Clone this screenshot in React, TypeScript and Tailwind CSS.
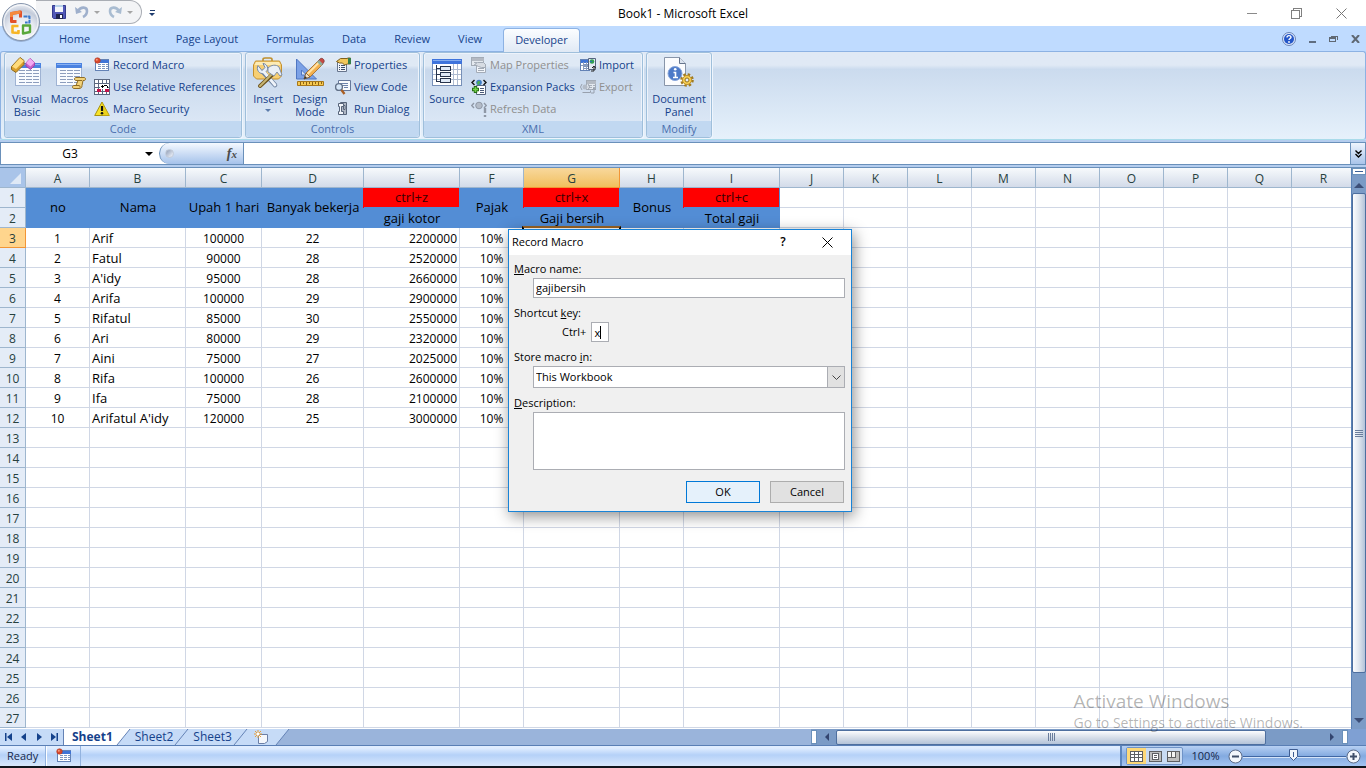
import type { ReactNode } from 'react';

const TABS = ['Home', 'Insert', 'Page Layout', 'Formulas', 'Data', 'Review', 'View'];
const COLUMNS = 'ABCDEFGHIJKLMNOPQR'.split('');
const WIDTHS = [64, 96, 76, 102, 96, 64, 96, 64, 96, 64, 64, 64, 64, 64, 64, 64, 64, 64];

const EMPLOYEES: [string, number, number, number][] = [
  ['Arif', 100000, 22, 2200000],
  ['Fatul', 90000, 28, 2520000],
  ["A'idy", 95000, 28, 2660000],
  ['Arifa', 100000, 29, 2900000],
  ['Rifatul', 85000, 30, 2550000],
  ['Ari', 80000, 29, 2320000],
  ['Aini', 75000, 27, 2025000],
  ['Rifa', 100000, 26, 2600000],
  ['Ifa', 75000, 28, 2100000],
  ["Arifatul A'idy", 120000, 25, 3000000],
];

const BLANK_ROWS = Array.from({ length: 15 }, (_, i) => i + 13);

/* ---------- icons ---------- */

function SheetLines({ x, y, w, h, gray }: { x: number; y: number; w: number; h: number; gray?: boolean }) {
  const head = gray ? '#b4bac3' : '#3f74d6';
  const line = gray ? '#a9b0ba' : '#7d96c0';
  const rows = [];
  for (let ly = y + 5; ly < y + h - 1; ly += 2) rows.push(ly);
  return (
    <g shapeRendering="crispEdges">
      <rect x={x} y={y} width={w} height={h} fill={gray ? '#e4e9ef' : '#fff'} stroke={gray ? '#a3abb6' : '#6382b5'} />
      <rect x={x} y={y} width={w} height="3" fill={head} />
      {rows.map((ly) => (
        <path key={ly} d={`M${x + 2} ${ly}H${x + w - 1}`} stroke={line} strokeDasharray="3 1" />
      ))}
    </g>
  );
}

function LargeGrid() {
  return (
    <g>
      <rect x="4.5" y="6.5" width="25" height="22" fill="#f8fbff" stroke="#9fb3d3" />
      <rect x="4" y="6" width="26" height="5" fill="#4b82e0" />
      <path d="M5 7.500h24" stroke="#87b0f3" />
      <path
        d="M8 13.500h20M8 16.500h20M8 19.500h20M8 22.500h20M8 25.500h20"
        stroke="#8c9dbd"
        strokeDasharray="6 1"
        shapeRendering="crispEdges"
      />
    </g>
  );
}

function VisualBasicIcon() {
  return (
    <svg className="size-8" viewBox="0 0 32 32">
      <LargeGrid />
      <path d="M.5 9.500 9 .5l4 3v4l-8 8-4.500-3z" fill="#d99f2b" stroke="#8d6a1d" />
      <path d="M1 9.500 9 1l4 3-8 8z" fill="#ffdc7c" />
      <path d="m15 6 4-4.500 4.500 4v3l-4 4-4.500-3.500z" fill="#c45fc8" stroke="#a243a8" />
      <path d="m15 6 4-4.500 4.500 4-4 4z" fill="#f3a9f2" />
    </svg>
  );
}

function MacrosIcon() {
  return (
    <svg className="size-8" viewBox="0 0 32 32">
      <g transform="translate(-2 0)">
        <LargeGrid />
      </g>
      <path
        d="M22 20.500h8c2 0 2 3 0 3h-1l-1 5c0 2-1 3-3 3h-5c-2 0-2-3 0-3h2l2-5h-2c-2 0-2-3 0-3z"
        fill="#f2d27a"
        stroke="#8f6c24"
      />
      <path d="M24 23.500h4M20 28.500h5c1 0 1 1 1 2" stroke="#8f6c24" fill="none" />
    </svg>
  );
}

function ToolboxIcon() {
  return (
    <svg className="size-8" viewBox="0 0 32 32">
      <path d="M11 4V2.500c0-1 1-1.500 2-1.500h5c1 0 2 .5 2 1.500V4" fill="none" stroke="#bf8f2c" strokeWidth="1.600" />
      <path d="m1.500 8 2-4h24l2 4v11l-3 3h-22l-3-3z" fill="#f7cf73" stroke="#c4902f" />
      <path d="M4 5h23l1.500 3h-26z" fill="#fdebb5" />
      <path d="m11 15 12 13" stroke="#6f83a0" strokeWidth="4.600" strokeLinecap="round" />
      <path d="M6 8.500c-2 4 1 9 6 8l3-3c2-3-1-7-4-7l2 4-3 3z" fill="#e8eef6" stroke="#7588a3" />
      <path d="m12 15 11 13" stroke="#eef3f9" strokeWidth="2.800" strokeLinecap="round" />
      <path d="M20 18 8 29" stroke="#6d531d" strokeWidth="4" strokeLinecap="round" />
      <path d="M20 17 8 29" stroke="#c6b574" strokeWidth="2" strokeLinecap="round" />
      <path d="M16 11c3-3 8-4 11-1l3 8-2 1-3-4-3 4-6-4z" fill="#eaeff6" stroke="#7f8fa7" />
    </svg>
  );
}

function DesignIcon() {
  return (
    <svg className="size-8" viewBox="0 0 32 32">
      <path d="M2.500 2v20h20z" fill="#7ba1e6" stroke="#4f76c2" />
      <path d="M7.500 13v5h5z" fill="#d7e4f6" stroke="#4f76c2" />
      <path d="M3.500 24.500h26v4h-26z" fill="#f6c84f" stroke="#a7771b" />
      <path d="M6.500 25v3M9.500 25v2M12.500 25v3M15.500 25v2M18.500 25v3M21.500 25v2M24.500 25v3M27.500 25v2" stroke="#8c6315" />
      <path d="m10 22 2-6L25 3l4 4-13 13z" fill="#f4b04d" stroke="#9a672a" strokeWidth=".8" />
      <path d="m13.500 17 12-12" stroke="#ffe3a6" strokeWidth="2" />
      <path d="m24 4 2-2c2-2 5 1 4 3l-2 3z" fill="#c84a43" stroke="#7b3b39" strokeWidth=".8" />
      <path d="m23 5 2-2 4 4-2 2z" fill="#8fae9a" />
      <path d="m10 22 2-6 4 4z" fill="#f8e2c0" stroke="#735b3b" strokeWidth=".8" />
      <path d="m10 22 1-3 2 2z" fill="#333" />
    </svg>
  );
}

function SourceIcon() {
  return (
    <svg className="size-8" viewBox="0 0 32 32" shapeRendering="crispEdges">
      <rect x="1.500" y="2.500" width="29" height="26" fill="#fff" stroke="#7790b8" />
      <rect x="1" y="2" width="30" height="5" fill="#3f74dc" />
      <path d="M2 3.500h28" stroke="#86aef0" />
      <path d="M2 12.500h28M2 17.500h28M2 22.500h28M22.500 7v21M26.500 7v21" stroke="#aebbd0" />
      <path d="M5.500 8v17M5.500 11.500h4M5.500 17.500h4M5.500 24.500h4" stroke="#27344d" fill="none" />
      <g fill="#dfe9f6" stroke="#27344d">
        <path d="M9.500 9.500h10v4h-10zM9.500 15.500h10v4h-10zM9.500 21.500h10v4h-10z" />
      </g>
    </svg>
  );
}

function DocumentPanelIcon() {
  return (
    <svg className="size-8" viewBox="0 0 32 32">
      <path d="M1.500.500h15l6 6v22h-21z" fill="#fbfcfe" stroke="#8895a9" />
      <path d="M16.500.500v6h6" fill="#dce4ef" stroke="#66758d" />
      <circle cx="12" cy="16.500" r="7" fill="#4d7ac8" stroke="#88a7dc" />
      <path d="M10.500 15.500h2V20M10 20.500h5" stroke="#fff" strokeWidth="1.600" fill="none" />
      <circle cx="12.200" cy="12.300" r="1.300" fill="#fff" />
      <circle cx="24" cy="23" r="5.500" fill="none" stroke="#a07b22" strokeWidth="2.600" strokeDasharray="2.400 1.920" />
      <circle cx="24" cy="23" r="4.500" fill="#f7cf55" stroke="#c0922b" />
      <circle cx="24" cy="23" r="2" fill="#e6eefa" stroke="#93701c" />
    </svg>
  );
}

function RecordIcon() {
  return (
    <svg className="size-4 shrink-0" viewBox="0 0 16 16">
      <SheetLines x={1.5} y={2.5} w={13} h={11} />
      <circle cx="3.500" cy="3.500" r="2.800" fill="#d8492c" stroke="#a83320" strokeWidth=".5" />
      <circle cx="2.800" cy="2.800" r="1" fill="#f69a7c" />
    </svg>
  );
}

function RelativeIcon() {
  return (
    <svg className="size-4 shrink-0" viewBox="0 0 16 16" shapeRendering="crispEdges">
      <path d="M1 1h14v14H1z" fill="#fff" />
      <path d="M.5.500h15v15H.500zM4.500 0v16M8.500 0v16M12.500 0v16M0 4.500h16M0 8.500h16M0 12.500h16" fill="none" stroke="#5b6880" />
      <path d="M3 10h4v3H3zM11 10h4v3h-4z" fill="#c4144a" />
      <path d="M6 5h8v5H6z" fill="#fff" />
      <path d="M7 7.500h3M8.500 6v3M10 6.500h3M13.500 7v2" stroke="#000" />
    </svg>
  );
}

function WarningIcon() {
  return (
    <svg className="size-4 shrink-0" viewBox="0 0 16 16">
      <path d="M8 1 15.300 14.500H.7z" fill="#f8e329" stroke="#a89210" strokeLinejoin="round" />
      <path d="M8 1 15.300 14.500H9z" fill="#e3c313" opacity=".6" />
      <path d="M8 5v5" stroke="#111" strokeWidth="2.200" />
      <circle cx="8" cy="12.300" r="1.300" fill="#111" />
    </svg>
  );
}

function PropertiesIcon({ gray }: { gray?: boolean }) {
  return (
    <svg className="size-4 shrink-0" viewBox="0 0 16 16">
      {gray && <SheetLines x={0.5} y={0.5} w={12} h={8} gray />}
      <path d={gray ? 'M5.500 7.500h9v8h-9z' : 'M2.500 4.500h9v10h-9z'} fill="#f2f5fa" stroke={gray ? '#a3abb6' : '#66748c'} />
      <path
        d={gray ? 'M7 11.500h6M7 13.500h6' : 'M4 8.500h1M6 8.500h4M4 10.500h1M6 10.500h4M4 12.500h1M6 12.500h4'}
        stroke={gray ? '#a3abb6' : '#3c4c69'}
      />
      <path
        d={gray ? 'm3.500 7.500 3-2h6l2 2v3h-4l-3-1z' : 'm1.500 4.500 4-3h7V1h3v6h-3l-3 1-2-2h-3z'}
        fill={gray ? '#d7dce3' : '#f2c75a'}
        stroke={gray ? '#a3abb6' : '#80611e'}
      />
      {!gray && <path d="M13 1h3v6h-3z" fill="#377e49" />}
    </svg>
  );
}

function ViewCodeIcon() {
  return (
    <svg className="size-4 shrink-0" viewBox="0 0 16 16">
      <path d="M3.500 1.500h12v10h-12z" fill="#f8fafd" stroke="#66789b" />
      <path d="M5 4.500h8M7 6.500h6M9 8.500h4" stroke="#6d83ab" />
      <circle cx="4" cy="8" r="3.400" fill="#d5e6f8" stroke="#627188" strokeWidth="1.400" />
      <path d="m6.500 11 3 4" stroke="#a95e23" strokeWidth="2.400" />
    </svg>
  );
}

function RunDialogIcon() {
  return (
    <svg className="size-4 shrink-0" viewBox="0 0 16 16">
      <path d="M5.500 1.500h6v12h-5z" fill="#aeb6c3" stroke="#57647a" />
      <path d="M3.500 2.500h5v3h-2v5h2v3h-5v-3h1v-5h-1z" fill="#f2f5fa" stroke="#57647a" />
      <path d="M8.500 4.500h1.500v4H8.500z" fill="#e9edf3" stroke="#57647a" />
    </svg>
  );
}

function ExpansionIcon() {
  return (
    <svg className="size-4 shrink-0" viewBox="0 0 16 16">
      <path d="M5.500 6.500h9v9h-9z" fill="#fff" stroke="#55647f" />
      <path d="M9 9.500h4M9 11.500h4M9 13.500h4" stroke="#4a5a78" />
      <circle cx="8" cy="3.500" r="2.800" fill="#3b7bc4" />
      <path d="M6 4c1-3 3-2 3-1S8 6 7 6z" fill="#4caf50" />
      <path d="M3.500 1 1 3.500 3.500 6M12.500 1 15 3.500 12.500 6" fill="none" stroke="#111" strokeWidth="1.400" />
      <path d="M4.500 7v7M1 10.500h7" stroke="#276f17" strokeWidth="3.400" />
      <path d="M4.500 8v5M2 10.500h5" stroke="#74d24b" strokeWidth="1.600" />
    </svg>
  );
}

function RefreshIcon() {
  return (
    <svg className="size-4 shrink-0" viewBox="0 0 16 16" fill="none" stroke="#8f98a6">
      <circle cx="8" cy="4.500" r="3.300" fill="#b4bcc8" />
      <path d="M3 2 .7 4.500 3 7M13 2l2.300 2.500L13 7" strokeWidth="1.400" />
      <path d="M14 7v5M14 14v2" strokeWidth="2.400" />
    </svg>
  );
}

function TransferIcon({ gray }: { gray?: boolean }) {
  return (
    <svg className="size-4 shrink-0" viewBox="0 0 16 16">
      {gray ? (
        <>
          <SheetLines x={6.5} y={1.5} w={9} h={9} gray />
          <circle cx="5" cy="8" r="2.500" fill="#b4bcc8" />
          <path d="m2 5-1.500 3L2 11M8 5l1.500 3L8 11M2.500 13.500h8v-2" fill="none" stroke="#98a0ad" />
        </>
      ) : (
        <>
          <SheetLines x={0.5} y={2.5} w={9} h={11} />
          <path d="M3.500 5v8M6.500 5v8M1 8.500h8" stroke="#8b9cba" shapeRendering="crispEdges" />
          <path d="M8.500 1.500h7v11h-7z" fill="#e3eaf4" stroke="#55647f" />
          <circle cx="12" cy="4.500" r="2.300" fill="#2f9e52" />
          <path d="M10 4.500h2" stroke="#2c6fb5" />
        </>
      )}
      <path d="M11 14h3v-4m-2 1 2-2 1.500 2" fill="none" stroke={gray ? '#98a0ad' : '#222'} />
    </svg>
  );
}

function OfficeButton() {
  return (
    <button aria-label="Office Button" className="absolute left-0 top-0 z-20">
      <svg className="h-[44px] w-[42px]" viewBox="1 0 42 44">
        <defs>
          <radialGradient id="orb" cx="50%" cy="75%" r="75%">
            <stop offset="0" stopColor="#fff" />
            <stop offset=".5" stopColor="#e6e9f0" />
            <stop offset=".75" stopColor="#c3cbda" />
            <stop offset="1" stopColor="#f2f4f8" />
          </radialGradient>
        </defs>
        <circle cx="22" cy="23" r="19" fill="#6f85a8" opacity=".5" />
        <circle cx="22" cy="22" r="18.500" fill="url(#orb)" stroke="#8796ad" />
        <circle cx="22" cy="22" r="17" fill="none" stroke="#fff" strokeOpacity=".8" />
        <g fill="none" strokeLinejoin="round">
          <path d="M17.500 21.500h-5v-8l9-1.500v5.500" stroke="#e2502a" strokeWidth="3" />
          <path d="M12.500 17v-3.500l9-1.500" stroke="#f58a3c" strokeWidth="3" />
          <path d="M24.500 16.500h6v6h-4.500" stroke="#3a78cc" strokeWidth="2" strokeDasharray="4 .6" />
          <path d="M19.500 26h-6v6.500l6 .5v-3" stroke="#f7b526" strokeWidth="2.600" />
          <path d="M24 25.500h7v6.500l-7 1.500z" stroke="#5aa83c" strokeWidth="2.400" />
        </g>
      </svg>
    </button>
  );
}

/* ---------- ribbon pieces ---------- */

function Group({ label, children }: { label: string; children: ReactNode }) {
  return (
    <section className="flex h-[86px] flex-col rounded-[3px] border border-[#9fbfdb] bg-linear-to-b from-[#dfe9f5] from-15% via-[#c8d8ec] via-20% to-[#e0ebf8] shadow-[inset_0_0_0_1px_#edf3fb,1px_1px_0_#eef5fd]">
      <div className="flex h-[68px] px-[2px] pt-px">{children}</div>
      <h2 className="h-4 rounded-b-[3px] bg-[#c1d8f1] text-center leading-4 text-[#4a6fae]">{label}</h2>
    </section>
  );
}

function BigButton({ icon, lines, arrow, className }: { icon: ReactNode; lines: string[]; arrow?: boolean; className: string }) {
  return (
    <button className={`flex flex-col items-center pt-[3px] leading-[13px] ${className}`}>
      {icon}
      <span className="mt-[3px] whitespace-nowrap">{lines[0]}</span>
      {lines[1] && <span className="whitespace-nowrap">{lines[1]}</span>}
      {arrow && <span className="mt-1 border-x-[3px] border-t-[3px] border-x-transparent border-t-[#5c7cab]" />}
    </button>
  );
}

function SmallButton({ icon, label, disabled }: { icon: ReactNode; label: string; disabled?: boolean }) {
  return (
    <button disabled={disabled} className="flex h-[22px] items-center gap-[3px] whitespace-nowrap disabled:text-[#8f8f8f]">
      {icon}
      {label}
    </button>
  );
}

function TitleBar() {
  return (
    <header className="relative flex h-[26px] items-center bg-white">
      <div className="ml-[36px] flex h-6 w-[106px] items-center gap-[7px] self-start rounded-br-[12px] rounded-tr-[12px] border border-l-0 border-[#a9adb4] bg-[#f3f4f6] pl-[15px]">
        <button aria-label="Save">
          <svg className="size-4" viewBox="0 0 16 16">
            <path d="M1.500 1.500h13v13h-12l-1-1z" fill="#5158b8" stroke="#353b8f" />
            <path d="M4 1h8v7H4z" fill="#f3f5fb" />
            <path d="M4 1h8v2H4z" fill="#b6d0ea" />
            <path d="M5 10h7v5H5z" fill="#20254f" />
            <path d="M9 11h2v3H9z" fill="#fff" />
          </svg>
        </button>
        <button aria-label="Undo" className="flex items-center gap-1">
          <svg className="size-4" viewBox="0 0 16 16" fill="none">
            <path d="M4 7c3-5 9-4 9 0 0 3-2 5-4 6" stroke="#9fb0cc" strokeWidth="2.600" />
            <path d="m1 3 1 7 6-2z" fill="#9fb0cc" />
          </svg>
          <span className="border-x-[3px] border-t-[3px] border-x-transparent border-t-[#a5a5a5]" />
        </button>
        <button aria-label="Redo" className="flex items-center gap-1">
          <svg className="size-4" viewBox="0 0 16 16" fill="none">
            <path d="M12 7c-3-5-9-4-9 0 0 3 2 5 4 6" stroke="#a9bcd1" strokeWidth="2.600" />
            <path d="m15 3-1 7-6-2z" fill="#a9bcd1" />
          </svg>
          <span className="border-x-[3px] border-t-[3px] border-x-transparent border-t-[#a5a5a5]" />
        </button>
      </div>
      <button aria-label="Customize Quick Access Toolbar" className="ml-[7px] flex flex-col items-center gap-[2px]">
        <span className="h-px w-[5px] bg-[#1f3c6e]" />
        <span className="border-x-[3px] border-t-[3px] border-x-transparent border-t-[#1f3c6e]" />
      </button>
      <h1 className="absolute inset-x-0 pt-px text-center text-xs text-black">Book1 - Microsoft Excel</h1>
      <div className="relative ml-auto flex items-center gap-[34px] pr-[19px]">
        <button aria-label="Minimize" className="h-px w-[10px] bg-[#8a8a8a]" />
        <button aria-label="Restore">
          <svg className="size-[11px]" viewBox="0 0 11 11" fill="none" stroke="#808080" shapeRendering="crispEdges">
            <path d="M.5 2.500h8v8h-8zM2.500 2V.500h8v8H9" />
          </svg>
        </button>
        <button aria-label="Close">
          <svg className="size-[11px]" viewBox="0 0 11 11" stroke="#777">
            <path d="m.5.500 10 10m0-10-10 10" />
          </svg>
        </button>
      </div>
    </header>
  );
}

function TabStrip() {
  return (
    <nav className="flex h-[25px] items-end bg-[#bfdbff] pl-[45px] text-[#15428b]">
      {TABS.map((tab) => (
        <button key={tab} className="h-6 px-[14px]">
          {tab}
        </button>
      ))}
      <button className="relative z-10 -mb-px ml-[7px] h-6 rounded-t-[4px] border border-b-0 border-[#8db2e3] bg-linear-to-b from-[#fbfdff] to-[#e0e9f5] px-[11px]">
        Developer
      </button>
      <div className="ml-auto flex h-6 items-center gap-[13px] pr-[6px]">
        <button aria-label="Help">
          <svg className="size-[14px]" viewBox="0 0 14 14">
            <circle cx="7" cy="7" r="6.500" fill="#dce8fb" stroke="#6b83b5" />
            <circle cx="7" cy="7" r="5" fill="#2456c8" />
            <path d="M5 5.500C5 3 9 3 9 5.300 9 6.500 7 6.500 7 8" fill="none" stroke="#fff" strokeWidth="1.400" />
            <circle cx="7" cy="10" r=".9" fill="#fff" />
          </svg>
        </button>
        <button aria-label="Minimize workbook" className="mt-[6px] h-[2px] w-[7px] bg-[#5f6d80]" />
        <button aria-label="Restore workbook">
          <svg className="h-[8px] w-[9px]" viewBox="0 0 9 8" fill="none" stroke="#5f6873" shapeRendering="crispEdges">
            <path d="M.5 2.500h6v4h-6zM2 1h6.500v4" />
            <path d="M0 2.500h7" strokeWidth="2" />
          </svg>
        </button>
        <button aria-label="Close workbook">
          <svg className="h-[8px] w-[9px]" viewBox="0 0 9 8" stroke="#5f6873" strokeWidth="2">
            <path d="m1 0 7 8m0-8L1 8" />
          </svg>
        </button>
      </div>
    </nav>
  );
}

function Ribbon() {
  return (
    <div className="bg-[#bfdbff]">
      <div className="flex h-[89px] gap-[3px] rounded-[3px] border border-[#8db2e3] border-b-[#a9dbea] bg-linear-to-b from-[#e0e9f5] from-15% via-[#cbdbee] via-20% to-[#e6f1fb] px-[3px] text-[#15428b]">
        <Group label="Code">
          <BigButton className="w-[40px]" icon={<VisualBasicIcon />} lines={['Visual', 'Basic']} />
          <BigButton className="w-[45px]" icon={<MacrosIcon />} lines={['Macros']} />
          <div className="w-[147px] pl-[2px]">
            <SmallButton icon={<RecordIcon />} label="Record Macro" />
            <SmallButton icon={<RelativeIcon />} label="Use Relative References" />
            <SmallButton icon={<WarningIcon />} label="Macro Security" />
          </div>
        </Group>
        <Group label="Controls">
          <BigButton className="w-[40px]" icon={<ToolboxIcon />} lines={['Insert']} arrow />
          <BigButton className="w-[44px]" icon={<DesignIcon />} lines={['Design', 'Mode']} />
          <div className="w-[85px] pl-[3px]">
            <SmallButton icon={<PropertiesIcon />} label="Properties" />
            <SmallButton icon={<ViewCodeIcon />} label="View Code" />
            <SmallButton icon={<RunDialogIcon />} label="Run Dialog" />
          </div>
        </Group>
        <Group label="XML">
          <BigButton className="w-[42px]" icon={<SourceIcon />} lines={['Source']} />
          <div className="w-[111px] pl-[3px]">
            <SmallButton icon={<PropertiesIcon gray />} label="Map Properties" disabled />
            <SmallButton icon={<ExpansionIcon />} label="Expansion Packs" />
            <SmallButton icon={<RefreshIcon />} label="Refresh Data" disabled />
          </div>
          <div className="w-[61px] pl-px">
            <SmallButton icon={<TransferIcon />} label="Import" />
            <SmallButton icon={<TransferIcon gray />} label="Export" disabled />
          </div>
        </Group>
        <Group label="Modify">
          <BigButton className="w-[60px]" icon={<DocumentPanelIcon />} lines={['Document', 'Panel']} />
        </Group>
      </div>
    </div>
  );
}

function FormulaBar() {
  return (
    <div className="border-y-2 border-[#b4cdee] bg-[#b4cdee]">
      <div className="flex h-[23px] border-y border-[#6a90ba] bg-white">
        <div className="flex w-[159px] items-center border-l border-[#6a90ba]">
          <input aria-label="Name Box" defaultValue="G3" className="w-[138px] text-center text-xs text-black outline-none" />
          <button aria-label="Name list" className="ml-[6px] border-x-4 border-t-4 border-x-transparent border-t-black" />
        </div>
        <div className="flex w-[85px] items-center justify-between rounded-l-[11px] border border-y-0 border-[#6a90ba] bg-linear-to-b from-[#f5f9ff] to-[#a5c2ea] pl-[5px] pr-[6px]">
          <span className="size-[9px] rounded-full border border-[#c3cbd8] bg-linear-to-br from-[#8e9cb5] to-[#f6f9ff]" />
          <button aria-label="Insert Function" className="font-['Liberation_Serif',serif] text-sm font-bold italic text-[#4c4c4c]">
            f<span className="text-[11px]">x</span>
          </button>
        </div>
        <input aria-label="Formula Bar" className="min-w-0 flex-1 px-1 text-xs outline-none" />
        <button aria-label="Expand Formula Bar" className="flex w-4 items-center justify-center border border-y-0 border-[#6a90ba] bg-linear-to-b from-[#eef4fd] to-[#a9c4ea]">
          <svg className="h-2 w-[7px]" viewBox="0 0 7 8" fill="none" stroke="#000" strokeWidth="1.400">
            <path d="m.5.500 3 3 3-3M.5 4l3 3 3-3" />
          </svg>
        </button>
      </div>
    </div>
  );
}

/* ---------- worksheet ---------- */

const CELL = 'h-5 border-b border-r border-[#d0d7e5] p-0 pt-[2px]';
const BLUE = 'border-0 bg-[#538dd5] p-0 text-center text-[13px] font-normal';
const MERGED = 'border-0 bg-[#538dd5] p-0 pb-[2px] text-center text-[13px] font-normal';
const RED =
  'relative h-5 border-b border-r border-[#538dd5] bg-[#ff0000] p-0 text-center text-[13px] font-normal text-[#3a0000] shadow-[-1px_0_0_#ff0000]';

function RowHeader({ n }: { n: number }) {
  return (
    <th
      scope="row"
      className={`h-5 border-b border-r p-0 pt-[2px] text-center font-normal text-[#27413e] ${
        n === 3 ? 'border-[#f29536] bg-[#ffd58d]' : 'border-[#9eb6ce] bg-[#e4ecf7]'
      }`}
    >
      {n}
    </th>
  );
}

function EmptyCells({ count }: { count: number }) {
  return Array.from({ length: count }, (_, i) => <td key={i} className={CELL} />);
}

function Worksheet() {
  return (
    <div className="min-w-0 flex-1 overflow-hidden bg-white">
      <table className="w-max table-fixed border-separate border-spacing-0 whitespace-nowrap font-['Open_Sans','Noto_Sans',sans-serif] text-xs leading-[17px] text-black">
        <colgroup>
          <col className="w-[26px]" />
          {WIDTHS.map((width, i) => (
            <col key={i} style={{ width }} />
          ))}
        </colgroup>
        <thead>
          <tr>
            <th className="relative h-5 border-b border-r border-[#9eb6ce] bg-[#a9c4e9] p-0">
              <button aria-label="Select all" className="absolute bottom-[3px] right-[4px] border-b-[11px] border-l-[11px] border-b-[#dfe9f6] border-l-transparent" />
            </th>
            {COLUMNS.map((c) => (
              <th
                key={c}
                scope="col"
                className={`h-5 border-b border-r bg-linear-to-b p-0 pt-[2px] text-center font-normal text-[#27413e] ${
                  c === 'G' ? 'border-[#f29536] from-[#f8d89c] to-[#f1bf5c]' : 'border-[#9eb6ce] from-[#f7fafc] to-[#d3dbe9]'
                }`}
              >
                {c}
              </th>
            ))}
          </tr>
        </thead>
        <tbody>
          <tr>
            <RowHeader n={1} />
            <th rowSpan={2} className={MERGED}>no</th>
            <th rowSpan={2} className={MERGED}>Nama</th>
            <th rowSpan={2} className={MERGED}>Upah 1 hari</th>
            <th rowSpan={2} className={MERGED}>Banyak bekerja</th>
            <td className={RED}>ctrl+z</td>
            <th rowSpan={2} className={MERGED}>Pajak</th>
            <td className={RED}>ctrl+x</td>
            <th rowSpan={2} className={MERGED}>Bonus</th>
            <td className={RED}>ctrl+c</td>
            <EmptyCells count={9} />
          </tr>
          <tr>
            <RowHeader n={2} />
            <th className={BLUE}>gaji kotor</th>
            <th className={BLUE}>Gaji bersih</th>
            <th className={BLUE}>Total gaji</th>
            <EmptyCells count={9} />
          </tr>
          {EMPLOYEES.map(([name, wage, days, gross], i) => (
            <tr key={name}>
              <RowHeader n={i + 3} />
              <td className={`${CELL} text-center`}>{i + 1}</td>
              <td className={`${CELL} pl-[2px] text-[13px]`}>{name}</td>
              <td className={`${CELL} text-center`}>{wage}</td>
              <td className={`${CELL} text-center`}>{days}</td>
              <td className={`${CELL} pr-[2px] text-right`}>{gross}</td>
              <td className={`${CELL} text-center`}>10%</td>
              <td className={`${CELL} relative`}>
                {i === 0 && <span className="absolute -inset-[2px] border-2 border-black border-t-[#9c6524]" />}
              </td>
              <EmptyCells count={11} />
            </tr>
          ))}
          {BLANK_ROWS.map((n) => (
            <tr key={n}>
              <RowHeader n={n} />
              <EmptyCells count={18} />
            </tr>
          ))}
        </tbody>
      </table>
    </div>
  );
}

function VerticalScrollbar() {
  return (
    <div className="flex w-[15px] flex-col items-center border-l border-[#5b82b6] bg-[#7b9bc6]">
      <div className="flex h-[7px] w-full items-center justify-center border border-[#6a90ba] bg-white">
        <span className="h-px w-2 bg-[#3c6096]" />
      </div>
      <button aria-label="Scroll up" className="flex h-[18px] w-full items-center justify-center pt-[2px]">
        <span className="border-x-[5px] border-b-[5px] border-x-transparent border-b-[#3d4f78]" />
      </button>
      <div className="flex h-[480px] w-full flex-col items-center justify-center gap-px rounded-[2px] border border-[#4e6f9f] bg-linear-to-r from-[#fbfcfe] via-[#dfe5ee] to-[#b4c3d9]">
        {[0, 1, 2, 3].map((i) => (
          <span key={i} className="h-px w-2 bg-[#6a7d9c]" />
        ))}
      </div>
      <button aria-label="Scroll down" className="mt-auto flex h-[18px] w-full items-center justify-center">
        <span className="border-x-[5px] border-t-[5px] border-x-transparent border-t-[#3d4f78]" />
      </button>
    </div>
  );
}

function Slope({ fill, next }: { fill: string; next: string }) {
  return (
    <svg className="h-4 w-[17px] shrink-0" viewBox="0 0 17 16">
      <path d="M0 0h17v16H0z" fill={next} />
      <path d="M0 0h15L2 16H0z" fill={fill} />
      <path d="M15 0 2 16" stroke="#6482b5" fill="none" />
    </svg>
  );
}

function SheetBar() {
  return (
    <div className="flex h-[17px] border-b border-[#5a7fb5] bg-[#9ab4db]">
      <div className="flex w-[63px] items-center justify-between bg-[#c6dbf7] px-[5px]">
        {['M0 0h1.500v8H0zM7 0v8L2 4z', 'M6 0v8L1 4z', 'M2 0v8l5-4z', 'M6.500 0H8v8H6.500zM1 0v8l5-4z'].map((d, i) => (
          <button key={d} aria-label={['First sheet', 'Previous sheet', 'Next sheet', 'Last sheet'][i]}>
            <svg className="size-2" viewBox="0 0 8 8" fill="#15428b">
              <path d={d} />
            </svg>
          </button>
        ))}
      </div>
      <button className="border-l border-[#6482b5] bg-white pl-2 pr-[2px] text-xs font-bold leading-4 text-[#15428b]">Sheet1</button>
      <Slope fill="#fff" next="#c6dbf7" />
      <button className="bg-[#c6dbf7] pl-[3px] text-xs leading-4 text-[#15428b]">Sheet2</button>
      <Slope fill="#c6dbf7" next="#c6dbf7" />
      <button className="bg-[#c6dbf7] pl-[3px] text-xs leading-4 text-[#15428b]">Sheet3</button>
      <Slope fill="#c6dbf7" next="#c6dbf7" />
      <button aria-label="Insert Worksheet" className="bg-[#c6dbf7] px-[5px]">
        <svg className="size-[15px]" viewBox="0 0 15 15">
          <path d="M4.500 4.500h9v7l-3 2h-6z" fill="#f4f7fc" stroke="#6b7fa6" />
          <path d="M4 0v8M0 4h8M1 1l6 6M7 1 1 7" stroke="#e9a036" />
          <circle cx="4" cy="4" r="1.500" fill="#fff" />
        </svg>
      </button>
      <Slope fill="#c6dbf7" next="#9ab4db" />
      <div className="ml-auto flex w-[555px] items-center bg-[#7b9bc6]">
        <span className="h-[14px] w-[6px] border border-[#6a90ba] bg-white" />
        <button aria-label="Scroll left" className="flex w-[19px] justify-center">
          <span className="border-y-4 border-r-4 border-y-transparent border-r-[#33456f]" />
        </button>
        <div className="flex h-[15px] flex-1 items-center justify-center gap-px rounded-[2px] border border-[#4e6f9f] bg-linear-to-b from-[#fbfcfe] via-[#d6dee9] to-[#b4c3d9]">
          {[0, 1, 2, 3].map((i) => (
            <span key={i} className="h-2 w-px bg-[#6a7d9c]" />
          ))}
        </div>
        <button aria-label="Scroll right" className="flex w-[76px] justify-end pr-[8px]">
          <span className="border-y-4 border-l-4 border-y-transparent border-l-[#33456f]" />
        </button>
        <span className="h-[14px] w-[6px] border border-[#6a90ba] bg-white" />
        <span className="h-full w-[18px] bg-[#7fa0d3]" />
      </div>
    </div>
  );
}

function StatusBar() {
  return (
    <footer className="border-b-2 border-[#10151d]">
      <div className="flex h-5 bg-linear-to-b from-[#e0edff] from-10% via-[#b5d1f8] via-45% to-[#d9e8fc] leading-5 text-[#15284b]">
        <span className="w-[46px] border-r border-[#93b3df] pl-[7px]">Ready</span>
        <button aria-label="Record macro" className="flex w-[35px] items-center justify-center border-l border-r border-l-white border-r-[#93b3df]">
          <RecordIcon />
        </button>
        <div className="ml-auto flex items-center border-l-2 border-[#5d86bf] bg-linear-to-b from-[#b7d0f3] via-[#83aae0] to-[#a3c4f2] pl-1 pr-[5px]">
          <div className="flex h-[18px] items-center rounded-[2px] border border-[#6f93c7] bg-[#c9dbf3]">
            <button aria-label="Normal view" className="flex h-full w-[19px] items-center justify-center bg-[#fdd878]">
              <svg className="h-[11px] w-[13px]" viewBox="0 0 13 11" shapeRendering="crispEdges">
                <path d="M.5.500h12v10H.500zM4.500 0v11M8.500 0v11M0 3.500h13M0 6.500h13" fill="#fff" stroke="#5e5f62" />
              </svg>
            </button>
            <button aria-label="Page layout view" className="flex w-[19px] justify-center">
              <svg className="h-[11px] w-[13px]" viewBox="0 0 13 11" shapeRendering="crispEdges">
                <path d="M.5.500h12v10H.500z" fill="#bdbdbd" stroke="#5e5f62" />
                <path d="M3.500 2.500h6v6h-6zM5 4.500h3M5 6.500h3" fill="#fff" stroke="#5e5f62" />
              </svg>
            </button>
            <button aria-label="Page break view" className="flex w-[17px] justify-center">
              <svg className="h-[11px] w-[13px]" viewBox="0 0 13 11" shapeRendering="crispEdges">
                <path d="M.5.500h12v10H.500z" fill="#bdbdbd" stroke="#5e5f62" />
                <path d="M.5.500h4v6h-4zM4.500.500h4v6h-4z" fill="#f4f4f4" stroke="#5e5f62" />
              </svg>
            </button>
          </div>
          <button className="w-[45px] text-center">100%</button>
          <button aria-label="Zoom out">
            <svg className="size-[15px]" viewBox="0 0 15 15">
              <circle cx="7.500" cy="7.500" r="6.500" fill="#f2f6fc" stroke="#5b6b88" />
              <path d="M4 7.500h7" stroke="#3f4e69" strokeWidth="2" />
            </svg>
          </button>
          <div className="relative flex h-full w-[103px] items-center">
            <span className="h-px w-full bg-[#3f66a3] shadow-[0_1px_0_#d5e4f8]" />
            <input aria-label="Zoom" type="range" className="absolute inset-0 opacity-0" />
            <svg className="pointer-events-none absolute left-[46px] top-[3px] h-3 w-[9px]" viewBox="0 0 9 12">
              <path d="M.5.500h8v7l-4 4-4-4z" fill="#f2f6fc" stroke="#3f5d92" />
              <path d="M4.500 3v5" stroke="#3f5d92" />
            </svg>
          </div>
          <button aria-label="Zoom in">
            <svg className="size-[15px]" viewBox="0 0 15 15">
              <circle cx="7.500" cy="7.500" r="6.500" fill="#f2f6fc" stroke="#5b6b88" />
              <path d="M4 7.500h7M7.500 4v7" stroke="#3f4e69" strokeWidth="2" />
            </svg>
          </button>
        </div>
      </div>
    </footer>
  );
}

/* ---------- record macro dialog ---------- */

function RecordMacroDialog() {
  const field = 'rounded-none border border-[#abadb3] bg-white px-[2px] outline-none';
  return (
    <div
      role="dialog"
      aria-labelledby="dialog-title"
      className="absolute left-[508px] top-[229px] z-30 w-[344px] border border-[#1883d7] bg-[#f0f0f0] text-[11px] leading-4 text-black shadow-[2px_4px_14px_rgba(0,0,0,0.45)]"
    >
      <div className="flex h-[25px] items-center bg-white pb-px pl-[3px] pr-[18px]">
        <h2 id="dialog-title" className="text-[11px]">Record Macro</h2>
        <button aria-label="Help" className="ml-auto w-[10px] text-xs font-semibold">?</button>
        <button aria-label="Close" className="ml-[34px]">
          <svg className="size-[11px]" viewBox="0 0 11 11" stroke="#000">
            <path d="m.5.500 10 10m0-10-10 10" />
          </svg>
        </button>
      </div>
      <form className="flex flex-col pb-2 pl-[5px] pr-[6px] pt-[6px]">
        <label htmlFor="name"><u>M</u>acro name:</label>
        <input id="name" defaultValue="gajibersih" className={`ml-[19px] mt-px h-5 pb-px ${field}`} />
        <label htmlFor="key" className="mt-[7px]">Shortcut <u>k</u>ey:</label>
        <div className="ml-[48px] mt-px flex items-center gap-[5px]">
          <label htmlFor="key">Ctrl+</label>
          <input id="key" defaultValue="x" className={`h-5 w-[18px] ${field}`} />
          <span className="-ml-[14px] h-[13px] w-px bg-black" />
        </div>
        <label htmlFor="store" className="mt-[7px]">Store macro <u>i</u>n:</label>
        <div className="relative ml-[19px] mt-px flex">
          <select id="store" className={`h-[22px] w-full appearance-none ${field}`}>
            <option>This Workbook</option>
          </select>
          <span className="pointer-events-none absolute inset-y-0 right-0 flex w-[18px] items-center justify-center border border-[#abadb3] bg-[#e1e1e1]">
            <svg className="h-[5px] w-[9px]" viewBox="0 0 9 5" fill="none" stroke="#444">
              <path d="m.5.500 4 4 4-4" />
            </svg>
          </span>
        </div>
        <label htmlFor="description" className="mt-[7px]"><u>D</u>escription:</label>
        <textarea id="description" className={`ml-[19px] mt-px h-[58px] resize-none ${field}`} />
        <div className="mt-[11px] flex justify-end gap-[10px] pr-px">
          <button type="button" className="h-[22px] w-[74px] border border-[#0078d7] bg-[#e5f1fb]">OK</button>
          <button type="button" className="h-[22px] w-[74px] border border-[#adadad] bg-[#e1e1e1]">Cancel</button>
        </div>
      </form>
    </div>
  );
}

export default function App() {
  return (
    <div className="relative flex min-h-screen flex-col overflow-hidden bg-[#bfdbff] font-['Open_Sans','Noto_Sans',sans-serif] text-[11px]">
      <OfficeButton />
      <TitleBar />
      <TabStrip />
      <Ribbon />
      <FormulaBar />
      <main className="flex flex-1 border-t border-[#6a90ba]">
        <Worksheet />
        <VerticalScrollbar />
      </main>
      <SheetBar />
      <StatusBar />
      <RecordMacroDialog />
      <div className="pointer-events-none absolute bottom-[35px] right-[63px] z-10 text-sm leading-5 text-black/30">
        <p className="text-[19px] leading-6">Activate Windows</p>
        <p>Go to Settings to activate Windows.</p>
      </div>
    </div>
  );
}
